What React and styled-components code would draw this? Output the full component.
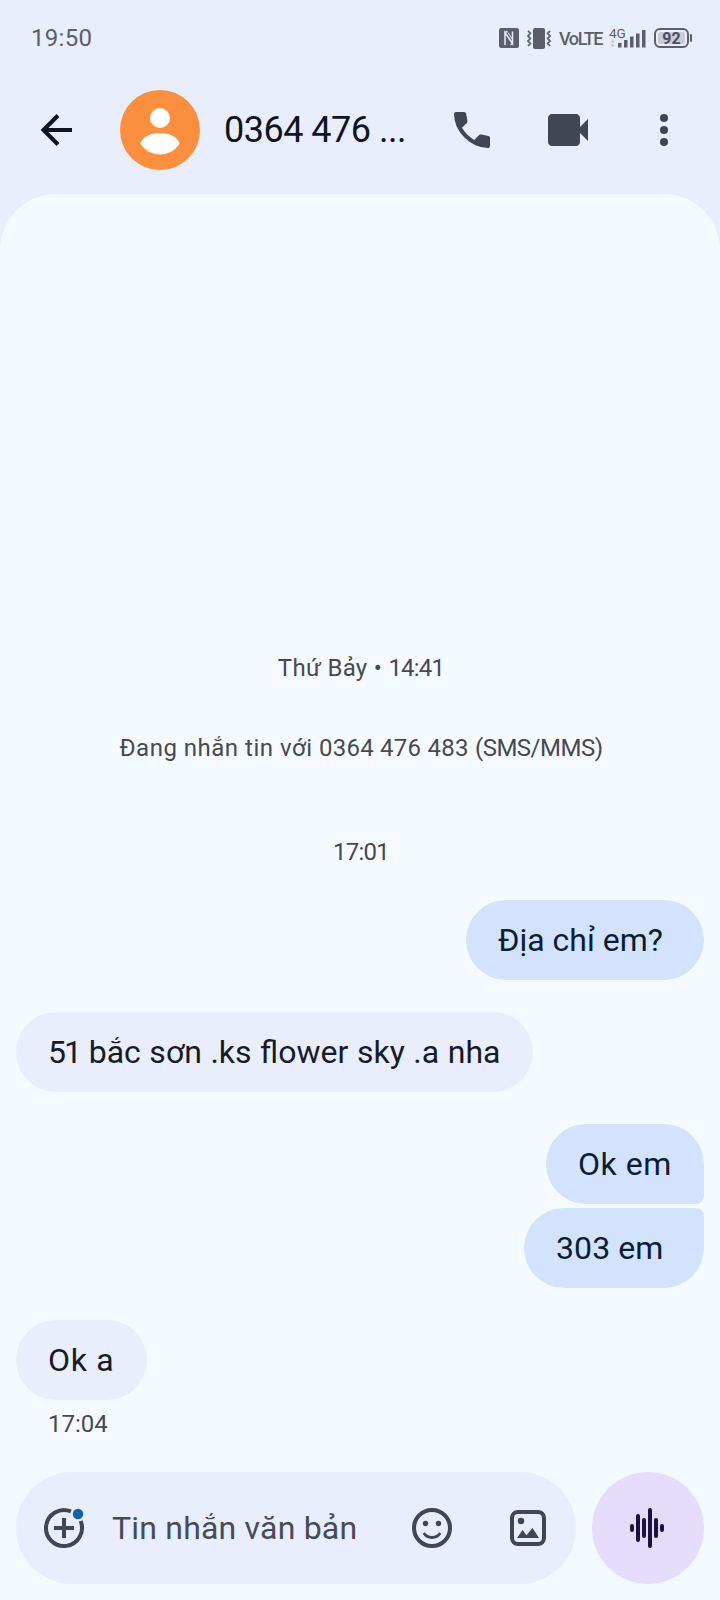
import React from 'react';
import styled, { createGlobalStyle } from 'styled-components';

const messages = [
    { runs: [['Địa chỉ em?']], sent: true, width: 238, gap: 0 },
    { runs: [['51', -1.9], [' bắc sơn .ks flower sky .a nha', 0, 0.6]], width: 517, gap: 32 },
    { runs: [['Ok em', 0.5]], sent: true, width: 158, gap: 32, group: 'first' },
    { runs: [['303 em', 0.1]], sent: true, width: 180, gap: 4, group: 'last' },
    { runs: [['Ok a', 0.7]], width: 131, gap: 32 },
];

const App = () => {
    return (
        <>
            <GlobalStyle />
            <Screen>
                <StatusBar>
                    <Clock>19:50</Clock>
                    <StatusIcons>
                        <NfcIcon />
                        <VibrateIcon />
                        <Volte>VoLTE</Volte>
                        <SignalIcon />
                        <Battery>
                            <BatteryBody>
                                <BatteryLevel>92</BatteryLevel>
                            </BatteryBody>
                            <BatteryTip />
                        </Battery>
                    </StatusIcons>
                </StatusBar>
                <AppBar>
                    <BackIcon />
                    <Avatar>
                        <PersonIcon />
                    </Avatar>
                    <Title>0364 476 ...</Title>
                    <Actions>
                        <CallIcon />
                        <VideoIcon />
                        <MoreIcon />
                    </Actions>
                </AppBar>
                <Conversation>
                    <Note $height={80}>
                        <Run $spacing={0.3}>Thứ Bảy • </Run>
                        <Run $spacing={-0.8}>14:41</Run>
                    </Note>
                    <Note $height={80}>
                        <Run $spacing={0.5}>Đang nhắn tin với </Run>
                        <Run $spacing={0.25}>0364 476 483 </Run>
                        <Run $spacing={-0.5}>(SMS/MMS)</Run>
                    </Note>
                    <Note $height={112} $line={128}>
                        <Run $spacing={-0.8}>17:01</Run>
                    </Note>
                    {messages.map((m, i) => (
                        <Bubble key={i} $sent={m.sent} $width={m.width} $gap={m.gap} $group={m.group}>
                            {m.runs.map(([text, spacing, words]) => (
                                <Run key={text} $spacing={spacing} $words={words}>{text}</Run>
                            ))}
                        </Bubble>
                    ))}
                    <SentAt>17:04</SentAt>
                </Conversation>
                <Composer>
                    <InputPill>
                        <AddIcon />
                        <Placeholder>Tin nhắn văn bản</Placeholder>
                        <EmojiIcon />
                        <ImageIcon />
                    </InputPill>
                    <VoiceButton>
                        <WaveIcon />
                    </VoiceButton>
                </Composer>
            </Screen>
        </>
    );
};

const NfcIcon = () => (
    <svg width="20" height="20" viewBox="0 0 20 20">
        <rect width="20" height="20" rx="2.5" fill="#5c5f6a" />
        <path d="M6 17V4.500L13.500 15.500V3.500M8.500 3.500Q6 3.500 6 6M11.500 16.500Q13.500 16.500 13.500 14" fill="none" stroke="#e8eefb" strokeWidth="1.500" />
        <path d="M8.800 4.500L13.500 11.500" stroke="#e8eefb" strokeWidth="1" />
    </svg>
);

const VibrateIcon = () => (
    <svg width="24" height="21" viewBox="0 0 24 21">
        <rect x="6" y="0" width="12" height="21" rx="2" fill="#5c5f6a" />
        <path d="M1 3l2.400 2.200L1 8l2.400 2.600L1 13l2.400 2.500L1 18M23 3l-2.400 2.200L23 8l-2.400 2.600L23 13l-2.400 2.500L23 18" fill="none" stroke="#5c5f6a" strokeWidth="1.700" />
    </svg>
);

const SignalIcon = () => (
    <SignalSvg width="37" height="22" viewBox="0 0 37 22">
        <text x="0" y="10.500">4G</text>
        <path d="M1.400 15.500L3.500 13l2.100 2.500zM1.400 17.500L3.500 20l2.100-2.500z" fill="#bcc1ce" />
        <path d="M9 16h3.500v4.500H9zM15 13h3.500v7.500H15zM21 9.500h3.500v11H21zM27 6.500h3.500v14H27zM33 3h3.500v17.500H33z" fill="#5c5f6a" />
    </SignalSvg>
);

const BackIcon = () => (
    <svg width="48" height="48" viewBox="0 0 48 48" fill="none" stroke="#0d1524" strokeWidth="4">
        <path d="M40 24H11M26 9.500L11.500 24L26 38.500" />
    </svg>
);

const PersonIcon = () => (
    <svg width="80" height="80" viewBox="0 0 80 80" fill="#fff">
        <circle cx="40" cy="28" r="10" />
        <path d="M20.500 53.500C22.500 46.500 31 43 40 43s17.500 3.500 19.500 10.500C55.500 60.500 48 64.500 40 64.500S24.500 60.500 20.500 53.500z" />
    </svg>
);

const CallIcon = () => (
    <svg width="48" height="48" viewBox="0 0 24 24" fill="#404654">
        <path d="M19.95 21q-3.125 0-6.187-1.35T8.2 15.8q-2.500-2.500-3.850-5.550T3 4.050q0-.45.3-.75t.75-.3H8.100q.35 0 .625.225t.325.575l.65 3.500q.05.35-.013.638T9.400 8.450L7 10.900q1.050 1.800 2.625 3.375T13.100 17l2.350-2.350q.225-.225.588-.338t.712-.062l3.450.7q.35.075.575.338T21 15.900v4.050q0 .45-.3.75t-.75.3" />
    </svg>
);

const VideoIcon = () => (
    <svg width="48" height="48" viewBox="0 0 24 24" fill="#404654">
        <path d="M4 20q-.825 0-1.413-.588T2 18V6q0-.825.588-1.412T4 4h12q.825 0 1.413.588T18 6v4.500l4-4v11l-4-4V18q0 .825-.588 1.413T16 20z" />
    </svg>
);

const MoreIcon = () => (
    <svg width="48" height="48" viewBox="0 0 48 48" fill="#404654">
        <circle cx="24" cy="12" r="4" />
        <circle cx="24" cy="24" r="4" />
        <circle cx="24" cy="36" r="4" />
    </svg>
);

const AddIcon = () => (
    <svg width="48" height="48" viewBox="0 0 48 48" fill="none" stroke="#404654" strokeWidth="4">
        <path d="M30.900 7.400A18 18 0 1 0 40.600 17.100M24 14v20M14 24h20" />
        <circle cx="38" cy="10" r="5.200" fill="#0f60ad" stroke="none" />
    </svg>
);

const EmojiIcon = () => (
    <svg width="48" height="48" viewBox="0 0 48 48" fill="none" stroke="#404654" strokeWidth="4">
        <circle cx="24" cy="24" r="18" />
        <path d="M15.800 29Q18.500 33.500 24 33.500T32.200 29" strokeWidth="2.800" />
        <circle cx="17.500" cy="19.500" r="2.700" fill="#404654" stroke="none" />
        <circle cx="30.500" cy="19.500" r="2.700" fill="#404654" stroke="none" />
    </svg>
);

const ImageIcon = () => (
    <svg width="48" height="48" viewBox="0 0 48 48" fill="#404654">
        <rect x="8" y="8" width="32" height="32" rx="6" fill="none" stroke="#404654" strokeWidth="4" />
        <circle cx="17" cy="17" r="3.200" />
        <path d="M13 34l5.500-8 4 5.200 6-7.200L35 34z" />
    </svg>
);

const WaveIcon = () => (
    <svg width="48" height="48" viewBox="0 0 48 48" stroke="#1c1140" strokeWidth="4" strokeLinecap="round">
        <path d="M8 22v4M14 12v24M20 16v16M26 6v36M32 16v16M38 22v4" />
    </svg>
);

const GlobalStyle = createGlobalStyle`
    *{
        box-sizing: border-box;
    }
    body{
        margin: 0;
        font-family: Roboto, "Liberation Sans", sans-serif;
    }
    svg{
        display: block;
        flex: none;
    }
`;
const Screen = styled.main`
    width: 720px;
    height: 1600px;
    display: flex;
    flex-direction: column;
    overflow: hidden;
    background: #e8eefb;
`;
const StatusBar = styled.header`
    height: 66px;
    padding: 10px 28px 0 31px;
    display: flex;
    align-items: center;
    justify-content: space-between;
`;
const Clock = styled.span`
    color: #5c5f6a;
    font-size: 24px;
    letter-spacing: 0.3px;
`;
const StatusIcons = styled.div`
    display: flex;
    align-items: center;
    gap: 8px;
`;
const Volte = styled.span`
    width: 42px;
    color: #5c5f6a;
    font-size: 18px;
    font-weight: 500;
    letter-spacing: -1.4px;
    white-space: nowrap;
`;
const SignalSvg = styled.svg`
    text{
        fill: #5c5f6a;
        font-size: 13.5px;
        font-weight: 400;
    }
`;
const Battery = styled.div`
    display: flex;
    align-items: center;
    gap: 1px;
`;
const BatteryBody = styled.div`
    width: 35px;
    height: 20px;
    padding: 2px;
    border: 2px solid #5c5f6a;
    border-radius: 6px;
`;
const BatteryLevel = styled.div`
    width: 27px;
    height: 12px;
    border-radius: 2px;
    background: #c9ccd8;
    color: #4c4f5a;
    font-size: 16px;
    font-weight: 700;
    line-height: 13px;
    text-align: center;
`;
const BatteryTip = styled.div`
    width: 2px;
    height: 8px;
    border-radius: 1px;
    background: #5c5f6a;
`;
const AppBar = styled.div`
    height: 128px;
    padding: 0 32px;
    display: flex;
    align-items: center;
`;
const Avatar = styled.div`
    width: 80px;
    height: 80px;
    margin-left: 40px;
    border-radius: 50%;
    background: #fb8f3d;
`;
const Title = styled.h1`
    margin: 0 0 0 24px;
    flex: 1;
    color: #0d1524;
    font-size: 36px;
    font-weight: 400;
    letter-spacing: -0.5px;
    white-space: nowrap;
`;
const Actions = styled.div`
    display: flex;
    gap: 48px;
`;
const Conversation = styled.section`
    flex: 1;
    padding: 434px 16px 0;
    display: flex;
    flex-direction: column;
    border-radius: 56px 56px 0 0;
    background: #f5faff;
`;
const Note = styled.p`
    height: ${p => p.$height}px;
    margin: 0;
    padding-left: 2px;
    flex: none;
    color: #464a50;
    font-size: 24px;
    line-height: ${p => p.$line || p.$height}px;
    text-align: center;
    white-space: pre;
`;
const Run = styled.span`
    letter-spacing: ${p => p.$spacing ? `${p.$spacing}px` : 'normal'};
    word-spacing: ${p => p.$words || 0}px;
`;
const radii = {
    first: '40px 40px 8px 40px',
    last: '40px 8px 40px 40px',
};
const Bubble = styled.div`
    width: ${p => p.$width}px;
    height: 80px;
    margin-top: ${p => p.$gap}px;
    padding-left: 32px;
    flex: none;
    align-self: ${p => p.$sent ? 'flex-end' : 'flex-start'};
    border-radius: ${p => radii[p.$group] || '40px'};
    background: ${p => p.$sent ? '#d3e3fe' : '#e8eefb'};
    color: ${p => p.$sent ? '#0a1c36' : '#161b28'};
    font-size: 32px;
    line-height: 80px;
    white-space: pre;
`;
const SentAt = styled.span`
    margin: 9px 0 0 32px;
    color: #464a50;
    font-size: 24px;
    line-height: 30px;
`;
const Composer = styled.footer`
    height: 144px;
    padding: 16px;
    display: flex;
    gap: 16px;
    background: linear-gradient(#f5faff, #f2fafe 16px);
`;
const InputPill = styled.div`
    flex: 1;
    padding: 0 24px;
    display: flex;
    align-items: center;
    gap: 48px;
    border-radius: 56px;
    background: #e8eefb;
`;
const Placeholder = styled.span`
    margin-left: -24px;
    flex: 1;
    color: #464b58;
    font-size: 32px;
    letter-spacing: 0.2px;
    white-space: nowrap;
`;
const VoiceButton = styled.div`
    width: 112px;
    height: 112px;
    display: flex;
    align-items: center;
    justify-content: center;
    border-radius: 50%;
    background: #e5dcfc;
`;
export default App;
